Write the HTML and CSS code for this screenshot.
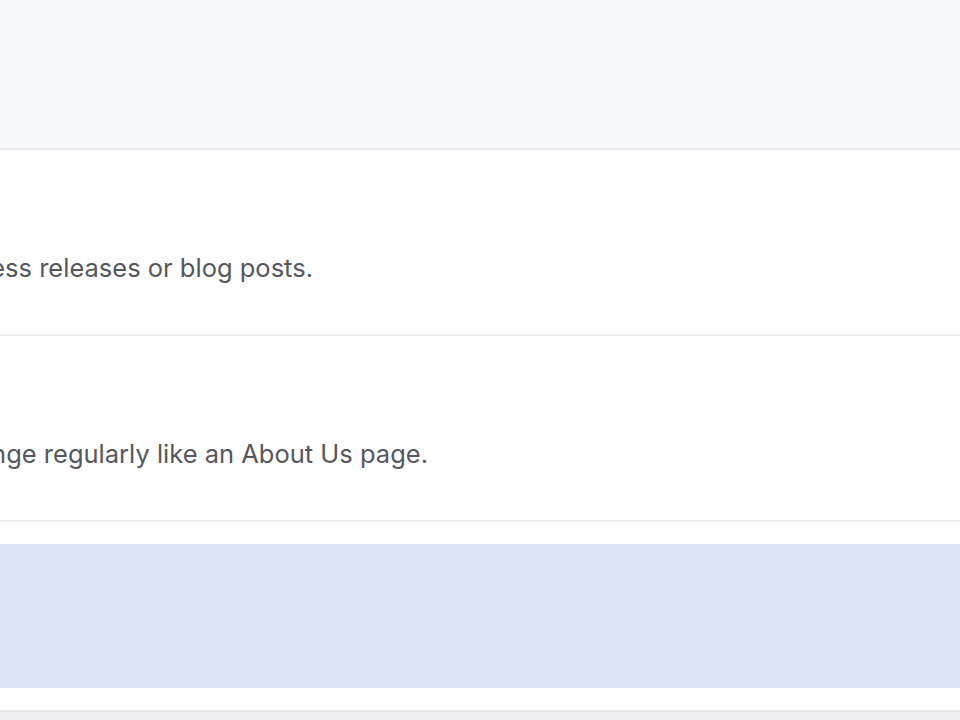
FILE: index.html
```html
<!DOCTYPE html>
<html lang="en">
<head>
  <meta charset="UTF-8">
  <meta name="viewport" content="width=device-width, initial-scale=1.0">
  <title>Content types</title>
  <link rel="stylesheet" href="styles.css">
</head>
<body>
  <header class="table-head"></header>

  <div class="type-list">
    <div class="type-row">
      <div class="type-desc type-desc--dynamic">
        <span>Dynamic content that changes frequently like press releases or blog posts.</span>
      </div>
    </div>
    <div class="type-row">
      <div class="type-desc type-desc--static">
        <span>Static content that doesn't change regularly like an About Us page.</span>
      </div>
    </div>
  </div>

  <section class="callout"></section>

  <footer class="page-foot"></footer>
</body>
</html>
```

FILE: styles.css
```css
* {
  margin: 0;
  padding: 0;
  box-sizing: border-box;
}

html, body {
  height: 100%;
  overflow: hidden;
}

body {
  font-family: Inter, "Noto Sans", sans-serif;
  background: #fff;
  color: #55575d;
}

.table-head {
  height: 150px;
  background: #f8f9fd;
  border-bottom: 2px solid #e8e9ed;
}

.type-row {
  height: 186px;
  padding-top: 102px;
  border-bottom: 2px solid #ececef;
}

.type-desc {
  display: flex;
  justify-content: flex-end;
  font-size: 25.5px;
  line-height: 32px;
  white-space: nowrap;
}

.type-desc--dynamic {
  width: 313px;
}

.type-desc--static {
  width: 428px;
}

.callout {
  height: 144px;
  margin-top: 22px;
  background: #dde5f9;
}

.page-foot {
  height: 40px;
  margin-top: 22px;
  background: #efeff3;
  box-shadow: inset 0 2px 2px rgba(0, 0, 0, 0.03);
}
```
